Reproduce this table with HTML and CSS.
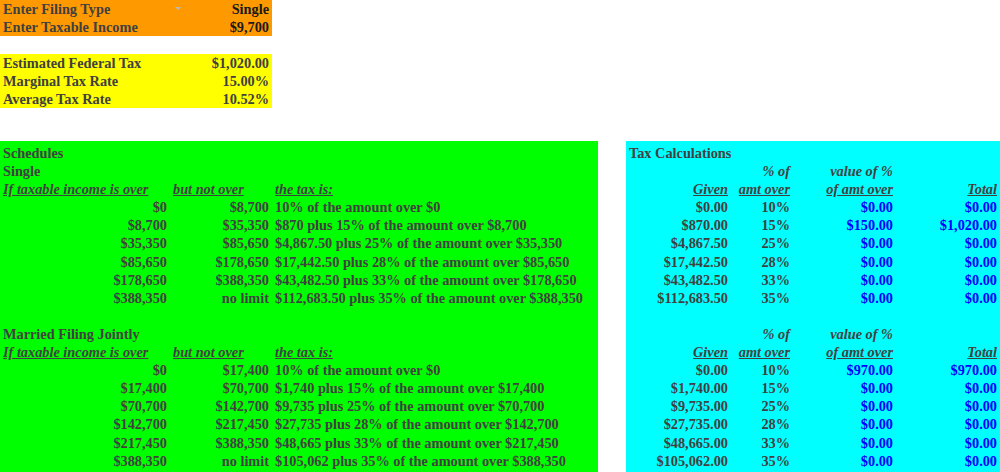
FILE: index.html
```html
<!DOCTYPE html>
<html>
<head>
<meta charset="utf-8">
<link rel="stylesheet" href="styles.css">
</head>
<body>
<div class="sheet">
  <div class="top">
    <div class="block orange">
      <div class="kv"><span class="lbl">Enter Filing Type</span><span class="dd"></span><span class="val input">Single</span></div>
      <div class="kv"><span class="lbl">Enter Taxable Income</span><span class="val input">$9,700</span></div>
    </div>
    <div class="gap-row"></div>
    <div class="block yellow">
      <div class="kv"><span class="lbl">Estimated Federal Tax</span><span class="val">$1,020.00</span></div>
      <div class="kv"><span class="lbl">Marginal Tax Rate</span><span class="val">15.00%</span></div>
      <div class="kv"><span class="lbl">Average Tax Rate</span><span class="val">10.52%</span></div>
    </div>
  </div>

  <div class="lower">
    <div class="sched">
      <span class="c l span3">Schedules</span>
      <span class="c l span3">Single</span>
      <span class="c l h">If taxable income is over</span><span class="c l h">but not over</span><span class="c l h">the tax is:</span>
      <span class="c r">$0</span><span class="c r">$8,700</span><span class="c l">10% of the amount over $0</span>
      <span class="c r">$8,700</span><span class="c r">$35,350</span><span class="c l">$870 plus 15% of the amount over $8,700</span>
      <span class="c r">$35,350</span><span class="c r">$85,650</span><span class="c l">$4,867.50 plus 25% of the amount over $35,350</span>
      <span class="c r">$85,650</span><span class="c r">$178,650</span><span class="c l">$17,442.50 plus 28% of the amount over $85,650</span>
      <span class="c r">$178,650</span><span class="c r">$388,350</span><span class="c l">$43,482.50 plus 33% of the amount over $178,650</span>
      <span class="c r">$388,350</span><span class="c r">no limit</span><span class="c l">$112,683.50 plus 35% of the amount over $388,350</span>
      <span class="c span3"></span>
      <span class="c l span3">Married Filing Jointly</span>
      <span class="c l h">If taxable income is over</span><span class="c l h">but not over</span><span class="c l h">the tax is:</span>
      <span class="c r">$0</span><span class="c r">$17,400</span><span class="c l">10% of the amount over $0</span>
      <span class="c r">$17,400</span><span class="c r">$70,700</span><span class="c l">$1,740 plus 15% of the amount over $17,400</span>
      <span class="c r">$70,700</span><span class="c r">$142,700</span><span class="c l">$9,735 plus 25% of the amount over $70,700</span>
      <span class="c r">$142,700</span><span class="c r">$217,450</span><span class="c l">$27,735 plus 28% of the amount over $142,700</span>
      <span class="c r">$217,450</span><span class="c r">$388,350</span><span class="c l">$48,665 plus 33% of the amount over $217,450</span>
      <span class="c r">$388,350</span><span class="c r">no limit</span><span class="c l">$105,062 plus 35% of the amount over $388,350</span>
    </div>

    <div class="calc">
      <span class="c l span4">Tax Calculations</span>
      <span class="c"></span><span class="c r i">% of</span><span class="c r i">value of %</span><span class="c"></span>
      <span class="c r h">Given</span><span class="c r h">amt over</span><span class="c r h">of amt over</span><span class="c r h">Total</span>
      <span class="c r">$0.00</span><span class="c r">10%</span><span class="c r b">$0.00</span><span class="c r b">$0.00</span>
      <span class="c r">$870.00</span><span class="c r">15%</span><span class="c r b">$150.00</span><span class="c r b">$1,020.00</span>
      <span class="c r">$4,867.50</span><span class="c r">25%</span><span class="c r b">$0.00</span><span class="c r b">$0.00</span>
      <span class="c r">$17,442.50</span><span class="c r">28%</span><span class="c r b">$0.00</span><span class="c r b">$0.00</span>
      <span class="c r">$43,482.50</span><span class="c r">33%</span><span class="c r b">$0.00</span><span class="c r b">$0.00</span>
      <span class="c r">$112,683.50</span><span class="c r">35%</span><span class="c r b">$0.00</span><span class="c r b">$0.00</span>
      <span class="c span4"></span>
      <span class="c"></span><span class="c r i">% of</span><span class="c r i">value of %</span><span class="c"></span>
      <span class="c r h">Given</span><span class="c r h">amt over</span><span class="c r h">of amt over</span><span class="c r h">Total</span>
      <span class="c r">$0.00</span><span class="c r">10%</span><span class="c r b">$970.00</span><span class="c r b">$970.00</span>
      <span class="c r">$1,740.00</span><span class="c r">15%</span><span class="c r b">$0.00</span><span class="c r b">$0.00</span>
      <span class="c r">$9,735.00</span><span class="c r">25%</span><span class="c r b">$0.00</span><span class="c r b">$0.00</span>
      <span class="c r">$27,735.00</span><span class="c r">28%</span><span class="c r b">$0.00</span><span class="c r b">$0.00</span>
      <span class="c r">$48,665.00</span><span class="c r">33%</span><span class="c r b">$0.00</span><span class="c r b">$0.00</span>
      <span class="c r">$105,062.00</span><span class="c r">35%</span><span class="c r b">$0.00</span><span class="c r b">$0.00</span>
    </div>
  </div>
</div>
</body>
</html>
```
FILE: styles.css
```css
html, body {
  margin: 0;
  padding: 0;
  background: #ffffff;
}
.sheet {
  width: 1000px;
  height: 472px;
  overflow: hidden;
  font-family: "Liberation Serif", "Times New Roman", serif;
  font-weight: bold;
  font-size: 14.3px;
  color: #404040;
}
.top {
  width: 272px;
  height: 141px;
}
.block {
  display: flex;
  flex-direction: column;
}
.orange { background: #ff9900; }
.yellow { background: #ffff00; }
.kv {
  box-sizing: border-box;
  height: 18px;
  line-height: 18px;
  display: flex;
  align-items: center;
  padding: 0 3px;
  position: relative;
}
.lbl { flex: 1; white-space: nowrap; }
.val { white-space: nowrap; }
.input { color: #1a1a1a; }
.dd {
  position: absolute;
  left: 175px;
  top: 7px;
  width: 0;
  height: 0;
  border-left: 3px solid transparent;
  border-right: 3px solid transparent;
  border-top: 3px solid #b8b8b8;
}
.gap-row { height: 18px; }
.lower {
  display: flex;
  gap: 28px;
  height: 331px;
}
.sched {
  width: 598px;
  background: #00ff00;
  display: grid;
  grid-template-columns: 170px 102px 1fr;
  grid-auto-rows: 18.1px;
  padding-top: 3px;
  align-content: start;
}
.calc {
  flex: 1;
  background: #00ffff;
  display: grid;
  grid-template-columns: 105px 62px 103px 104px;
  grid-auto-rows: 18.1px;
  padding-top: 3px;
  align-content: start;
}
.c {
  box-sizing: border-box;
  line-height: 18.1px;
  white-space: nowrap;
  overflow: visible;
  padding: 0 3px;
}
.l { text-align: left; }
.r { text-align: right; }
.span3 { grid-column: span 3; }
.span4 { grid-column: span 4; }
.h {
  font-style: italic;
  text-decoration: underline;
}
.i { font-style: italic; }
.b { color: #0000ff; }
```
